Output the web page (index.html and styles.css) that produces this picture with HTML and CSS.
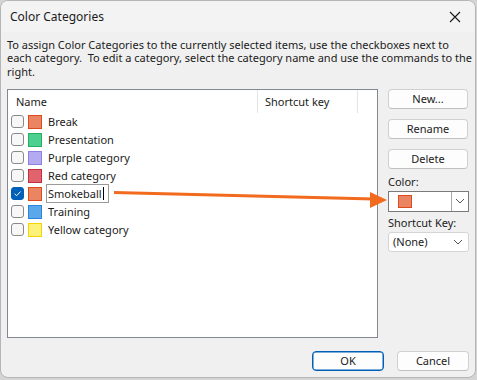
FILE: index.html
```html
<!DOCTYPE html>
<html>
<head>
<meta charset="utf-8">
<link rel="stylesheet" href="styles.css">
</head>
<body>
<div class="window">
  <div class="titlebar">
    <span class="title">Color Categories</span>
    <svg class="close" width="12" height="12" viewBox="0 0 12 12"><path d="M1 1L11 11M11 1L1 11" stroke="#1a1a1a" stroke-width="1.1" fill="none"/></svg>
  </div>
  <div class="content">
    <p class="desc"><span class="line">To assign Color Categories to the currently selected items, use the checkboxes next to</span><span class="line">each category.&nbsp; To edit a category, select the category name and use the commands to the</span><span class="line">right.</span></p>
    <div class="main">
      <div class="list">
        <div class="header">
          <div class="col-name">Name</div>
          <div class="col-key">Shortcut key</div>
          <div class="col-rest"></div>
        </div>
        <div class="rows">
          <div class="row"><span class="check"></span><span class="swatch sw-orange"></span><span class="label">Break</span></div>
          <div class="row"><span class="check"></span><span class="swatch sw-green"></span><span class="label">Presentation</span></div>
          <div class="row"><span class="check"></span><span class="swatch sw-purple"></span><span class="label">Purple category</span></div>
          <div class="row"><span class="check"></span><span class="swatch sw-red"></span><span class="label">Red category</span></div>
          <div class="row"><span class="check checked"><svg width="13" height="13" viewBox="0 0 13 13"><path d="M3.6 6.8L5.6 8.7L9.6 4.5" stroke="#ffffff" stroke-width="1" fill="none"/></svg></span><span class="swatch sw-orange"></span><span class="edit">Smokeball<span class="caret"></span></span></div>
          <div class="row"><span class="check"></span><span class="swatch sw-blue"></span><span class="label">Training</span></div>
          <div class="row"><span class="check"></span><span class="swatch sw-yellow"></span><span class="label">Yellow category</span></div>
        </div>
      </div>
      <div class="side">
        <button class="btn">New...</button>
        <button class="btn">Rename</button>
        <button class="btn">Delete</button>
        <div class="field-label label-color">Color:</div>
        <div class="combo color-combo">
          <span class="swatch big sw-orange"></span>
          <span class="drop"><svg width="10" height="6" viewBox="0 0 10 6"><path d="M1 1L5 5L9 1" stroke="#555" stroke-width="1" fill="none"/></svg></span>
        </div>
        <div class="field-label label-key">Shortcut Key:</div>
        <div class="combo key-combo">
          <span class="combo-text">(None)</span>
          <svg width="10" height="6" viewBox="0 0 10 6"><path d="M1 1L5 5L9 1" stroke="#555" stroke-width="1" fill="none"/></svg>
        </div>
      </div>
    </div>
    <div class="footer">
      <button class="btn ok">OK</button>
      <button class="btn">Cancel</button>
    </div>
  </div>
  <svg class="arrow" width="280" height="24" viewBox="0 0 280 24"><path d="M0 4.5L260 11" stroke="#f26a1e" stroke-width="3" fill="none"/><polygon points="256,4 273,12 256,20" fill="#f26a1e"/></svg>
</div>
</body>
</html>
```

FILE: styles.css
```css
* { box-sizing: border-box; }
html, body { margin: 0; padding: 0; }
body {
  background: #d4d4d4;
  font-family: "Noto Sans", "Open Sans", sans-serif;
  font-size: 11px;
  color: #1b1b1b;
}
.window {
  position: relative;
  width: 476px;
  height: 378px;
  background: #f0f0f0;
  border: 1px solid #b5b5b5;
  border-radius: 8px;
  overflow: hidden;
  display: flex;
  flex-direction: column;
}
.titlebar {
  height: 31px;
  background: #f3f3f3;
  display: flex;
  align-items: center;
  justify-content: space-between;
  padding: 0 10px 0 9px;
  flex: none;
}
.title { font-size: 12px; }
.close { margin-right: 4px; }
.content {
  flex: 1;
  display: flex;
  flex-direction: column;
  padding: 6px 6px 6px 6px;
}
.desc {
  margin: 0;
  display: flex;
  flex-direction: column;
  white-space: nowrap;
}
.desc .line {
  display: block;
  height: 13.3px;
  line-height: 13px;
}
.main {
  display: flex;
  gap: 10px;
  margin-top: 11px;
}
.list {
  width: 371px;
  height: 249px;
  background: #fff;
  border: 1px solid #828790;
  display: flex;
  flex-direction: column;
}
.header {
  display: flex;
  height: 23px;
  flex: none;
}
.header > div {
  display: flex;
  align-items: center;
}
.col-name { width: 250px; padding-left: 8px; border-right: 1px solid #e5e5e5; }
.col-key { width: 100px; padding-left: 7px; border-right: 1px solid #e5e5e5; }
.col-rest { flex: 1; }
.rows { display: flex; flex-direction: column; }
.row {
  height: 18px;
  display: flex;
  align-items: center;
  padding-left: 3px;
}
.check {
  width: 13px;
  height: 13px;
  border: 1px solid #8a8a8a;
  border-radius: 3px;
  background: #f7f7f7;
  flex: none;
  display: flex;
}
.check.checked {
  background: #005fb8;
  border-color: #005fb8;
}
.check.checked svg { margin: -1px; }
.swatch {
  width: 14px;
  height: 14px;
  margin-left: 4px;
  border: 1px solid;
  flex: none;
}
.sw-orange { background: #ea8563; border-color: #dc4b1e; }
.sw-green { background: #4dcf8f; border-color: #20b060; }
.sw-purple { background: #b3aaf0; border-color: #8d80e2; }
.sw-red { background: #e0636e; border-color: #c42f3c; }
.sw-blue { background: #5aa8ea; border-color: #2b86d9; }
.sw-yellow { background: #fff27a; border-color: #f3d400; }
.label { margin-left: 6px; }
.edit {
  margin-left: 4px;
  width: 63px;
  height: 19px;
  border: 1px solid #9a9a9a;
  padding-left: 1px;
  display: flex;
  align-items: center;
  background: #fff;
  margin-top: -1px;
}
.caret {
  width: 1px;
  height: 13px;
  background: #000;
  margin-left: 1px;
}
.side {
  width: 81px;
  display: flex;
  flex-direction: column;
}
.btn {
  font-family: inherit;
  font-size: 11px;
  color: #1b1b1b;
  background: #fdfdfd;
  border: 1px solid #d0d0d0;
  border-bottom-color: #c0c0c0;
  border-radius: 4px;
  height: 20px;
  padding: 0;
}
.side .btn { width: 80px; margin-bottom: 10px; }
.side .btn:nth-of-type(3) { margin-bottom: 0; }
.field-label { line-height: 13px; }
.label-color { margin-top: 6px; }
.label-key { margin-top: 4px; }
.combo {
  margin-top: 3px;
  background: #fff;
  display: flex;
  align-items: center;
}
.color-combo {
  height: 21px;
  border: 1px solid #7a7a7a;
  justify-content: space-between;
}
.swatch.big { width: 14px; height: 13px; margin-left: 9px; }
.drop {
  width: 17px;
  height: 19px;
  border-left: 1px solid #a8a8a8;
  display: flex;
  align-items: center;
  justify-content: center;
}
.key-combo {
  height: 20px;
  border: 1px solid #d5d5d5;
  border-radius: 3px;
  justify-content: space-between;
  padding: 0 5px 0 4px;
}
.footer {
  display: flex;
  justify-content: flex-end;
  gap: 13px;
  margin-top: 13px;
}
.footer .btn { width: 72px; }
.btn.ok { border: 1px solid #005fb8; box-shadow: inset 0 0 0 0.5px #005fb8; }
.arrow {
  position: absolute;
  left: 113px;
  top: 187px;
}
```
